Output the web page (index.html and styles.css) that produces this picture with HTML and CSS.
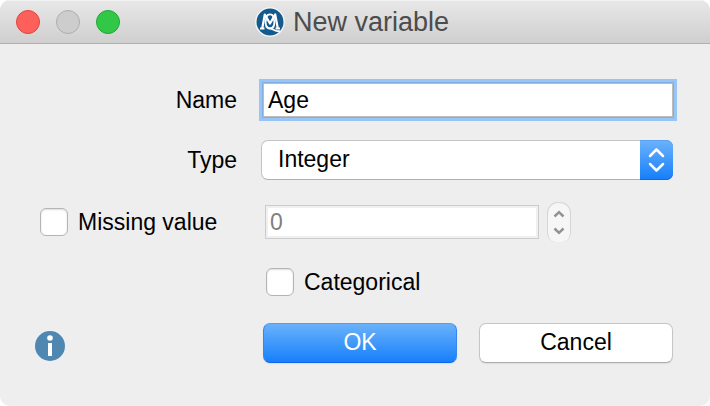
FILE: index.html
```
<!DOCTYPE html>
<html lang="en">
<head>
  <meta charset="UTF-8">
  <meta name="viewport" content="width=device-width, initial-scale=1.0">
  <title>New variable</title>
  <link rel="stylesheet" href="styles.css">
</head>
<body>
  <div class="window">
    <header class="titlebar">
      <div class="lights">
        <button class="light close" type="button" aria-label="Close"></button>
        <button class="light minimize" type="button" aria-label="Minimize" disabled></button>
        <button class="light maximize" type="button" aria-label="Zoom"></button>
      </div>
      <h1 class="title">
        <svg class="logo" width="30" height="30" viewBox="0 0 30 30" aria-hidden="true">
          <circle cx="15" cy="15" r="14.8" fill="#f4f7f9"/>
          <circle cx="15" cy="15" r="13.5" fill="#145a8d"/>
          <g fill="none" stroke="#fff" stroke-linejoin="round">
            <path stroke-width="2.200" d="M5 21.500h4.500M7.300 21L9.800 7.500l5.200 9 5.200-9L22.700 21M20.500 21.500h4.500"/>
            <path stroke-width="1.800" d="M11.500 10C9.500 17 11 21.500 15 21.500s5.500-4.500 3.500-11.500M11.500 10c1-3.500 6-3.500 7 0"/>
            <path stroke-width="1.800" d="M14 21.500c3.500-1 5 4 11 2.500"/>
          </g>
        </svg>
        <span>New variable</span>
      </h1>
    </header>

    <form class="form" onsubmit="return false">
      <label class="label" for="name">Name</label>
      <div class="field name-field">
        <input class="text-input" id="name" type="text" value="Age">
      </div>

      <label class="label" for="type">Type</label>
      <div class="field select">
        <select id="type">
          <option>Integer</option>
          <option>Decimal</option>
          <option>Text</option>
        </select>
        <span class="select-arrows">
          <svg width="33" height="40" viewBox="0 0 33 40" fill="none" stroke="#fff" stroke-width="2.500" stroke-linecap="round" stroke-linejoin="round" aria-hidden="true">
            <path d="M10 16l6.500-6.500L23 16M10 24l6.500 6.500L23 24"/>
          </svg>
        </span>
      </div>

      <label class="check missing"><input type="checkbox"> Missing value</label>
      <div class="field value-field">
        <input class="value-input" id="missing" type="text" value="0" aria-label="Missing value" disabled>
        <div class="stepper">
          <button type="button" aria-label="Increase" disabled>
            <svg width="12" height="8" viewBox="0 0 12 8"><path d="M1.500 6.500L6 2.200 10.500 6.500"/></svg>
          </button>
          <button type="button" aria-label="Decrease" disabled>
            <svg width="12" height="8" viewBox="0 0 12 8"><path d="M1.500 1.500L6 5.800 10.500 1.500"/></svg>
          </button>
        </div>
      </div>

      <label class="check categorical"><input type="checkbox"> Categorical</label>

      <button class="info" type="button" aria-label="Help">
        <svg width="30" height="30" viewBox="0 0 30 30" aria-hidden="true">
          <circle cx="15" cy="15" r="15" fill="#4f87b3"/>
          <circle cx="15" cy="7" r="2.800" fill="#fff"/>
          <rect x="13" y="12" width="4" height="13" fill="#fff"/>
        </svg>
      </button>
      <div class="field actions">
        <button class="btn primary" type="submit">OK</button>
        <button class="btn" type="button">Cancel</button>
      </div>
    </form>
  </div>
</body>
</html>
```
FILE: styles.css
```
* {
  box-sizing: border-box;
}
body {
  margin: 0;
  background: #fff;
  color: #000;
  font-family: "Liberation Sans", Arial, sans-serif;
  font-size: 23px;
}
button,
input,
select {
  margin: 0;
  font: inherit;
  color: inherit;
}
button {
  padding: 0;
  border: none;
  background: none;
}
svg {
  display: block;
}
.window {
  min-height: 100vh;
  background: #eee;
  border-radius: 10px;
  overflow: hidden;
}

/* title bar */
.titlebar {
  display: grid;
  grid-template-columns: 1fr auto 1fr;
  align-items: center;
  height: 44px;
  padding: 0 22px 0 16px;
  background: linear-gradient(#e8e8e8, #cfcfcf);
  border-bottom: 1px solid #b0b0b0;
  box-shadow: inset 0 1px #f2f2f2;
}
.lights {
  display: flex;
  gap: 16px;
}
.light {
  width: 24px;
  height: 24px;
  border: 1px solid;
  border-radius: 50%;
}
.close {
  background: #fd5f5a;
  border-color: #e2443f;
}
.minimize {
  background: #cdcdcd;
  border-color: #adadad;
}
.maximize {
  background: #33c748;
  border-color: #1fa832;
}
.title {
  display: flex;
  align-items: center;
  gap: 8px;
  margin: 0;
  font-size: 27px;
  font-weight: normal;
  line-height: 32px;
  color: #4c4c4c;
}

/* form */
.form {
  display: grid;
  grid-template-columns: 202px minmax(0, 1fr);
  grid-template-rows: 40px 40px 44px 36px 46px;
  gap: 20px 24px;
  align-items: center;
  padding: 36px 37px 40px 35px;
}
.label {
  text-align: right;
}
.name-field {
  display: flex;
  padding-left: 2px;
}
.text-input {
  flex: 1;
  min-width: 0;
  height: 34px;
  padding: 0 4px;
  background: #fff;
  border: 1px solid #bdbdbd;
  border-radius: 0;
  outline: none;
  box-shadow: 0 0 0 1px #82aee0, 0 0 0 4px #98c5f5;
}
.select {
  position: relative;
}
.select select {
  display: block;
  width: 100%;
  height: 40px;
  padding: 0 50px 2px 16px;
  appearance: none;
  background: #fff;
  border: 1px solid #c4c4c4;
  border-bottom-color: #b0b0b0;
  border-radius: 7px;
}
.select-arrows {
  position: absolute;
  top: 0;
  right: 0;
  border-radius: 0 7px 7px 0;
  background: linear-gradient(#6cb3fa, #157efb);
  box-shadow: inset 0 1px #5a9ff0, inset 0 -1px #0d65f0;
  pointer-events: none;
}

.check {
  display: flex;
  align-items: center;
  gap: 10px;
}
.check input {
  width: 28px;
  height: 28px;
  appearance: none;
  background: #fff;
  border: 1px solid #b4b4b4;
  border-radius: 6px;
  box-shadow: inset 0 1px 2px #ddd;
}
.check input:checked {
  background: #157efb;
}
.missing {
  padding-left: 5px;
}
.categorical {
  grid-column: 2;
  padding-left: 5px;
}

.value-field {
  display: flex;
  align-items: center;
  gap: 8px;
  padding: 0 102px 0 4px;
}
.value-input {
  flex: 1;
  min-width: 0;
  height: 34px;
  padding: 0 4px;
  background: #fff;
  border: 1px solid #ccc;
  border-radius: 0;
  box-shadow: inset 0 0 0 2px #f0f0f0;
  color: #7f7f7f;
}
.stepper {
  display: flex;
  flex-direction: column;
  width: 24px;
  height: 40px;
  padding: 2px 0;
  background: #f6f6f6;
  border: 1px solid #d6d6d6;
  border-bottom: none;
  border-radius: 11px 11px 9px 9px;
}
.stepper button {
  display: flex;
  flex: 1;
  align-items: center;
  justify-content: center;
}
.stepper path {
  fill: none;
  stroke: #929292;
  stroke-width: 2.5;
}

.info {
  justify-self: start;
  margin-top: 6px;
}
.actions {
  display: flex;
  gap: 22px;
  padding-left: 2px;
}
.btn {
  flex: 1;
  height: 40px;
  padding-bottom: 2px;
  background: #fff;
  border: 1px solid #c6c6c6;
  border-bottom-color: #adadad;
  border-radius: 7px;
  box-shadow: 0 1px 1px #ddd;
}
.primary {
  color: #fff;
  background: linear-gradient(#6cb3fa, #157efb) border-box;
  border-color: #559dee #3385f2 #0d65f0;
}
```
